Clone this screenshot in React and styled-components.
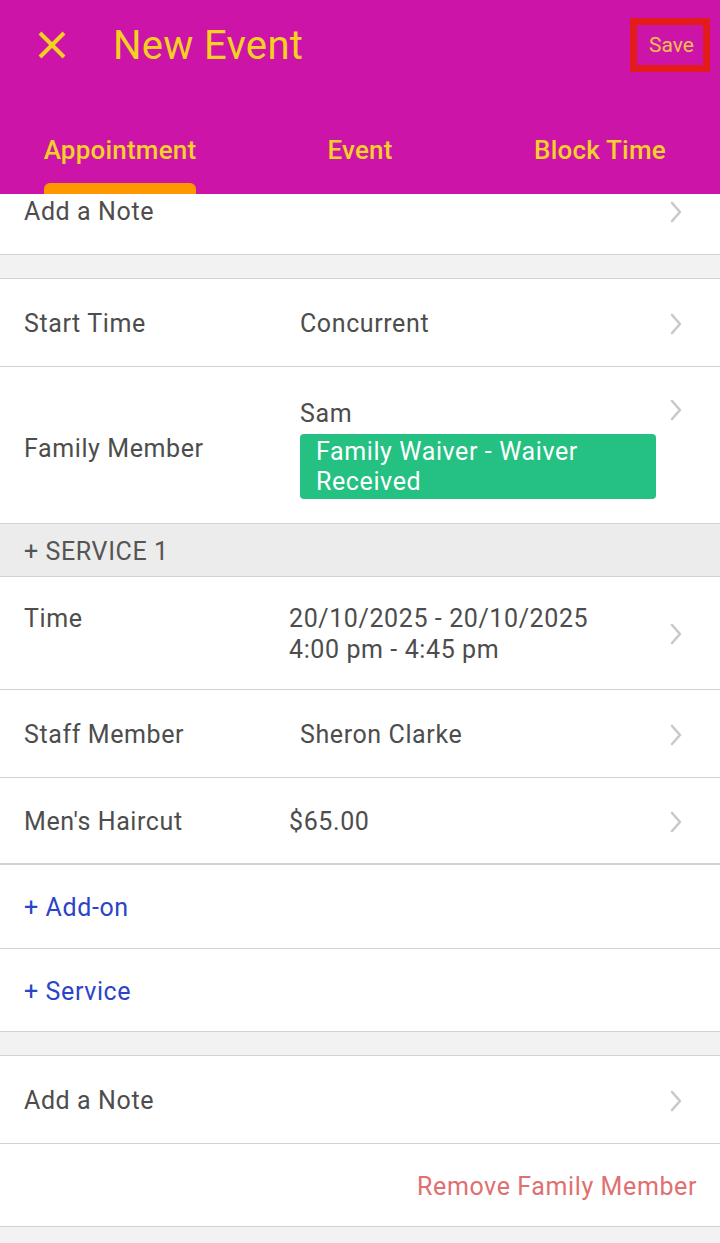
import React from "react";
import styled, { createGlobalStyle } from "styled-components";

const Global = createGlobalStyle`
  html, body { margin: 0; padding: 0; background: #f2f2f2; }
  body { font-family: Roboto, "Noto Sans", "Liberation Sans", sans-serif; -webkit-font-smoothing: antialiased; }
  * { box-sizing: border-box; }
`;

const Header = styled.header`
  position: fixed;
  top: 0;
  left: 0;
  right: 0;
  height: 194px;
  background: #cc14a8;
  z-index: 10;
  display: flex;
  flex-direction: column;
`;

const TopBar = styled.div`
  height: 90px;
  display: flex;
  align-items: center;
  padding: 0 10px 0 36px;
`;

const CloseBtn = styled.button`
  width: 32px;
  height: 32px;
  padding: 0;
  border: 0;
  background: none;
  display: flex;
  align-items: center;
  justify-content: center;
  margin-right: 45px;
`;

const Title = styled.h1`
  flex: 1;
  margin: 0;
  font-size: 40px;
  font-weight: 400;
  letter-spacing: 0.3px;
  color: #f5d023;
  line-height: 1;
  padding-top: 2px;
`;

const SaveBtn = styled.button`
  width: 80px;
  height: 54px;
  border: 7px solid #e31b1b;
  background: transparent;
  color: #f2c14e;
  font-family: inherit;
  font-size: 21px;
  padding: 0 0 0 3px;
  align-self: flex-start;
  margin-top: 18px;
`;

const TabBar = styled.nav`
  flex: 1;
  display: grid;
  grid-template-columns: repeat(3, 1fr);
  align-items: end;
`;

const TabCell = styled.div`
  display: flex;
  justify-content: center;
`;

const Tab = styled.div`
  display: inline-flex;
  flex-direction: column;
  align-items: stretch;
`;

const TabLabel = styled.span`
  font-size: 26px;
  font-weight: 500;
  letter-spacing: 0.2px;
  color: #f5cf2a;
  line-height: 30px;
  text-align: center;
  margin-bottom: ${(p) => (p.$active ? "18px" : "29px")};
`;

const Indicator = styled.span`
  height: 11px;
  background: #ff9800;
  border-radius: 6px 6px 0 0;
`;

const Content = styled.main`
  padding-top: 167px;
  font-size: 25px;
  letter-spacing: 0.6px;
`;

const Row = styled.div`
  display: grid;
  grid-template-columns: ${(p) => p.$labelW || 276}px 1fr 16px;
  align-items: center;
  min-height: ${(p) => p.$minH || 88}px;
  padding: ${(p) => p.$padTop ?? 2}px 36px ${(p) => p.$padBottom || 0}px 24px;
  background: #fff;
  border-bottom: ${(p) => (p.$thick ? 2 : 1)}px solid #d2d2d2;
  color: #4d4d4d;
  line-height: 31px;
`;

const Label = styled.span`
  align-self: ${(p) => p.$align || "center"};
`;

const Value = styled.div`
  align-self: ${(p) => p.$align || "center"};
  display: flex;
  flex-direction: column;
`;

const Chevron = styled.svg`
  align-self: ${(p) => p.$align || "center"};
  margin-top: ${(p) => p.$mt || 0}px;
  justify-self: end;
`;

const Badge = styled.div`
  width: 356px;
  margin-top: 5px;
  background: #25c183;
  color: #fff;
  border-radius: 4px;
  padding: 3px 20px 2px 16px;
  line-height: 30px;
`;

const Spacer = styled.div`
  height: 24px;
  background: #f2f2f2;
  border-bottom: 1px solid #d2d2d2;
`;

const SectionHeader = styled.div`
  height: 53px;
  display: flex;
  align-items: center;
  padding: 2px 0 0 24px;
  background: #ececec;
  border-bottom: 1px solid #d2d2d2;
  color: #555;
`;

const ActionRow = styled.div`
  height: ${(p) => p.$h || 83}px;
  display: flex;
  align-items: center;
  justify-content: ${(p) => (p.$right ? "flex-end" : "flex-start")};
  padding: 2px 23px 0 24px;
  background: #fff;
  border-bottom: 1px solid #d2d2d2;
  color: ${(p) => p.$color};
`;

const ChevronIcon = (props) => (
  <Chevron width="16" height="22" viewBox="0 0 16 22" {...props}>
    <polyline points="4,2 12,11 4,20" fill="none" stroke="#c9c9c9" strokeWidth="2.6" strokeLinecap="round" strokeLinejoin="round" />
  </Chevron>
);

const CloseIcon = () => (
  <svg width="30" height="30" viewBox="0 0 30 30">
    <path d="M3 3 L27 27 M27 3 L3 27" stroke="#f5d023" strokeWidth="4" strokeLinecap="butt" />
  </svg>
);

export default function App() {
  return (
    <>
      <Global />
      <Header>
        <TopBar>
          <CloseBtn aria-label="Close">
            <CloseIcon />
          </CloseBtn>
          <Title>New Event</Title>
          <SaveBtn>Save</SaveBtn>
        </TopBar>
        <TabBar>
          <TabCell>
            <Tab>
              <TabLabel $active>Appointment</TabLabel>
              <Indicator />
            </Tab>
          </TabCell>
          <TabCell>
            <Tab>
              <TabLabel>Event</TabLabel>
            </Tab>
          </TabCell>
          <TabCell>
            <Tab>
              <TabLabel>Block Time</TabLabel>
            </Tab>
          </TabCell>
        </TabBar>
      </Header>

      <Content>
        <Row>
          <Label>Add a Note</Label>
          <Value />
          <ChevronIcon />
        </Row>
        <Spacer />
        <Row>
          <Label>Start Time</Label>
          <Value>Concurrent</Value>
          <ChevronIcon />
        </Row>
        <Row $padTop={31} $padBottom={24}>
          <Label>Family Member</Label>
          <Value $align="start">
            <span>Sam</span>
            <Badge>Family Waiver - Waiver Received</Badge>
          </Value>
          <ChevronIcon $align="start" $mt={1} />
        </Row>
        <SectionHeader>+ SERVICE 1</SectionHeader>
        <Row $labelW={265} $padTop={26} $padBottom={24}>
          <Label $align="start">Time</Label>
          <Value $align="start">
            <span>20/10/2025 - 20/10/2025</span>
            <span>4:00 pm - 4:45 pm</span>
          </Value>
          <ChevronIcon />
        </Row>
        <Row $minH={88}>
          <Label>Staff Member</Label>
          <Value>Sheron Clarke</Value>
          <ChevronIcon />
        </Row>
        <Row $labelW={265} $minH={87} $thick>
          <Label>Men's Haircut</Label>
          <Value>$65.00</Value>
          <ChevronIcon />
        </Row>
        <ActionRow $color="#2b44c8" $h={84}>+ Add-on</ActionRow>
        <ActionRow $color="#2b44c8">+ Service</ActionRow>
        <Spacer />
        <Row>
          <Label>Add a Note</Label>
          <Value />
          <ChevronIcon />
        </Row>
        <ActionRow $right $color="#e07070">Remove Family Member</ActionRow>
        <Spacer />
      </Content>
    </>
  );
}
